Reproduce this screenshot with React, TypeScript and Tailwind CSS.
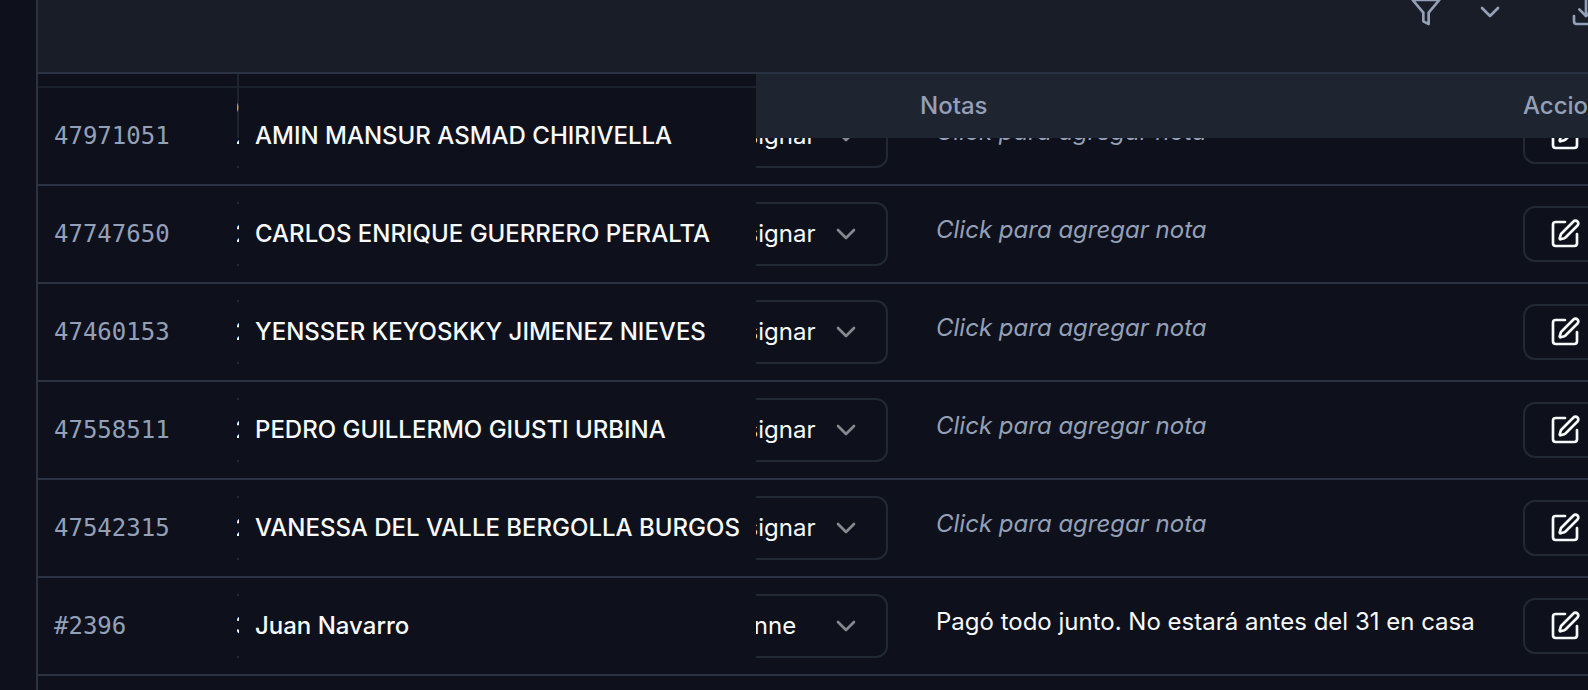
import { ChevronDown, Download, SquarePen } from "lucide-react";

type Row = { id: string; day: string; name: string; agent: string; note?: string };

const rows: Row[] = [
  { id: "47971051", day: "2", name: "AMIN MANSUR ASMAD CHIRIVELLA", agent: "Sin asignar" },
  { id: "47747650", day: "2", name: "CARLOS ENRIQUE GUERRERO PERALTA", agent: "Sin asignar" },
  { id: "47460153", day: "2", name: "YENSSER KEYOSKKY JIMENEZ NIEVES", agent: "Sin asignar" },
  { id: "47558511", day: "2", name: "PEDRO GUILLERMO GIUSTI URBINA", agent: "Sin asignar" },
  { id: "47542315", day: "2", name: "VANESSA DEL VALLE BERGOLLA BURGOS", agent: "Sin asignar" },
  { id: "#2396", day: "3", name: "Juan Navarro", agent: "Marianne", note: "Pagó todo junto. No estará antes del 31 en casa" },
];

function FunnelIcon() {
  return (
    <svg
      className="size-8"
      viewBox="0 0 24 24"
      fill="none"
      stroke="currentColor"
      strokeWidth="2"
      strokeLinecap="round"
      strokeLinejoin="round"
      aria-hidden="true"
    >
      <polygon points="22 3 2 3 10 12.46 10 19 14 21 14 12.46 22 3" />
    </svg>
  );
}

function Toolbar() {
  return (
    <div className="flex h-[74px] items-start justify-end border-b-2 border-[#2b3342] bg-[#191d28] text-[#94a0b8]">
      <div className="-mt-1 -mr-3.5 flex shrink-0">
        <button type="button" aria-label="Filtrar" className="mr-12 flex items-center gap-8">
          <FunnelIcon />
          <ChevronDown className="size-8" />
        </button>
        <button type="button" aria-label="Descargar" className="ml-4">
          <Download className="size-8" />
        </button>
      </div>
    </div>
  );
}

function AgentSelect({ row }: { row: Row }) {
  return (
    <div className="flex justify-end overflow-hidden">
      <div className="relative shrink-0">
        <select
          aria-label={`Asignar ${row.name}`}
          defaultValue={row.agent}
          className="h-16 w-56 appearance-none rounded-xl border-2 border-[#222935] bg-transparent px-6 text-2xl text-[#f8fafc]"
        >
          <option>Sin asignar</option>
          <option>Marianne</option>
        </select>
        <ChevronDown className="pointer-events-none absolute top-4 right-[26px] size-8 text-white opacity-50" />
      </div>
    </div>
  );
}

function OrderRow({ row }: { row: Row }) {
  return (
    <tr className="h-[98px] *:border-b-2 *:border-[#2b3342]">
      <td className="px-4 font-['DejaVu_Sans_Mono',monospace] text-[#94a0b8]">{row.id}</td>
      <td>
        <div className="flex h-16 items-center overflow-hidden border-y-2 border-[#222935]">
          <span className="-ml-0.5">{row.day}</span>
        </div>
      </td>
      <td className="px-4 font-medium whitespace-nowrap">{row.name}</td>
      <td>
        <AgentSelect row={row} />
      </td>
      <td className="pr-4 pl-8">
        <button
          type="button"
          className={row.note ? "mb-2 block px-4 whitespace-nowrap" : "mb-2 block px-4 whitespace-nowrap text-[#94a0b8] italic"}
        >
          {row.note ?? "Click para agregar nota"}
        </button>
      </td>
      <td className="pl-4">
        <button
          type="button"
          aria-label={`Editar ${row.name}`}
          className="flex h-14 w-[84px] items-center rounded-xl border-2 border-[#222935] pl-6"
        >
          <SquarePen className="size-8" />
        </button>
      </td>
    </tr>
  );
}

export default function App() {
  return (
    <main className="h-screen overflow-hidden bg-[#0e111b] pl-9 font-['Inter',sans-serif] text-2xl text-[#f8fafc]">
      <section className="min-h-full border-l-2 border-[#2b3342]">
        <Toolbar />
        <table className="w-full table-fixed border-separate border-spacing-0 text-left">
          <colgroup>
            <col className="w-[199px]" />
            <col className="w-[2px]" />
            <col className="w-[517px]" />
            <col className="w-[132px]" />
            <col />
            <col className="w-[81px]" />
          </colgroup>
          <thead className="text-[#94a0b8]">
            <tr className="h-[14px]">
              <th className="border-b-2 border-[#1c222d] p-0" />
              <th className="p-0 align-top font-medium">
                <div className="relative">
                  <div className="absolute inset-x-0 top-0 z-10 flex h-16 items-center overflow-hidden bg-[#1f2530]">
                    <span className="-ml-3">o</span>
                  </div>
                </div>
              </th>
              <th className="border-b-2 border-[#1c222d] p-0" />
              <th className="p-0 align-top">
                <div className="relative">
                  <div className="absolute inset-x-0 top-0 z-10 h-16 bg-[#1f2530]" />
                </div>
              </th>
              <th className="p-0 align-top font-medium">
                <div className="relative">
                  <div className="absolute inset-x-0 top-0 z-10 flex h-16 items-center bg-[#1f2530] pl-8">Notas</div>
                </div>
              </th>
              <th className="p-0 align-top font-medium">
                <div className="relative">
                  <div className="absolute inset-x-0 top-0 z-10 flex h-16 items-center overflow-hidden bg-[#1f2530] pl-4">
                    Acciones
                  </div>
                </div>
              </th>
            </tr>
          </thead>
          <tbody>
            {rows.map((row) => (
              <OrderRow key={row.id} row={row} />
            ))}
          </tbody>
        </table>
      </section>
    </main>
  );
}
